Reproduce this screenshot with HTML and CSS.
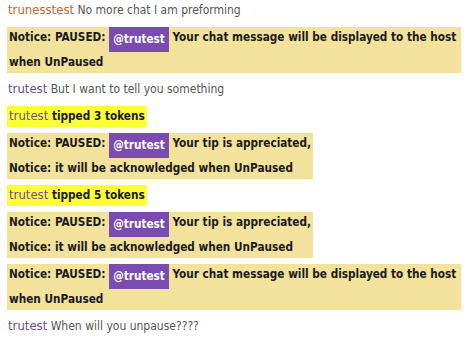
FILE: index.html
```html
<!DOCTYPE html>
<html>
<head>
<meta charset="utf-8">
<link rel="stylesheet" href="styles.css">
</head>
<body>
<div class="chat">
  <div class="msg"><span class="user orange">trunesstest</span> No more chat I am preforming</div>
  <div class="notice">Notice: PAUSED: <span class="badge">@trutest</span> Your chat message will be displayed to the host when UnPaused</div>
  <div class="msg"><span class="user purple">trutest</span> But I want to tell you something</div>
  <div class="tip"><span class="user purple">trutest</span> tipped 3 tokens</div>
  <div class="notice">Notice: PAUSED: <span class="badge">@trutest</span> Your tip is appreciated,<br>Notice: it will be acknowledged when UnPaused</div>
  <div class="tip"><span class="user purple">trutest</span> tipped 5 tokens</div>
  <div class="notice">Notice: PAUSED: <span class="badge">@trutest</span> Your tip is appreciated,<br>Notice: it will be acknowledged when UnPaused</div>
  <div class="notice">Notice: PAUSED: <span class="badge">@trutest</span> Your chat message will be displayed to the host when UnPaused</div>
  <div class="msg"><span class="user purple">trutest</span> When will you unpause????</div>
</div>
</body>
</html>
```
FILE: styles.css
```css
html, body {
  margin: 0;
  padding: 0;
  background: #ffffff;
}
.chat {
  display: flex;
  flex-direction: column;
  align-items: flex-start;
  gap: 6px;
  padding: 0 5px 0 7px;
  font-family: "DejaVu Sans", Verdana, sans-serif;
  font-stretch: condensed;
  font-size: 12px;
  line-height: 21px;
}
.msg {
  color: #555555;
  padding-left: 1px;
  height: 21px;
}
.user {
  font-weight: normal;
  font-size: 13px;
  line-height: 1;
}
.orange { color: #c4652c; }
.purple { color: #6f4d8c; }
.tip {
  background: #ffff38;
  color: #1a1a1a;
  font-weight: bold;
  font-size: 11.7px;
  padding: 0 2px;
  height: 21px;
}
.notice {
  background: #f3e29c;
  color: #1a1a1a;
  font-weight: bold;
  font-size: 11.7px;
  padding: 0 2px;
  max-width: 450px;
}
.badge {
  display: inline-block;
  background: #7a4bb0;
  color: #ffffff;
  padding: 0 4px;
  line-height: 25px;
  vertical-align: top;
}
```
